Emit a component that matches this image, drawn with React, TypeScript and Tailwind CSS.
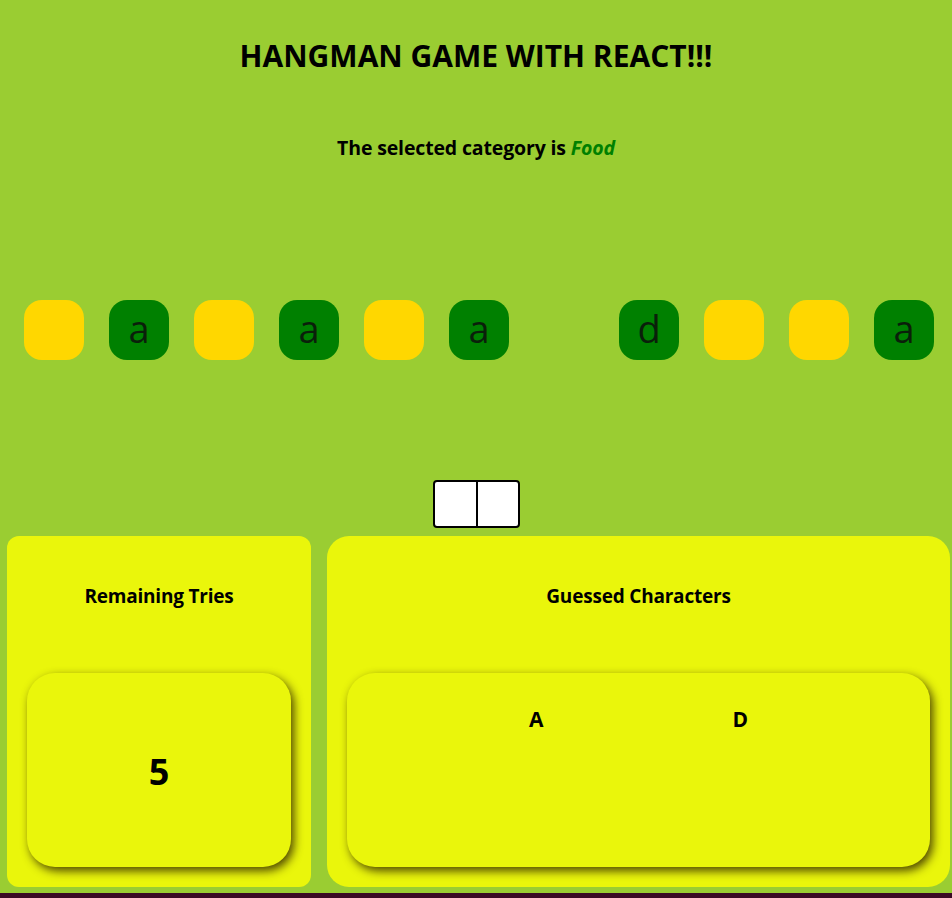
import React from "react";

const word = ["", "a", "", "a", "", "a", " ", "d", "", "", "a"];
const guessed = ["A", "D"];

export default function App() {
  return (
    <div className="min-h-[898px] bg-[#3b0a24] font-['Open_Sans',sans-serif] text-black">
      <div className="h-[893px] bg-[#9acd32] flex flex-col items-center">
        {/* Header */}
        <h1 className="mt-[37px] text-[30px] leading-[38px] font-bold">
          HANGMAN GAME WITH REACT!!!
        </h1>
        <p className="mt-[60px] text-[19.5px] leading-[26px] font-bold tracking-[-0.15px]">
          The selected category is{" "}
          <em className="text-[#008000] italic">Food</em>
        </p>

        {/* Word tiles */}
        <div className="mt-[139px] flex gap-[25px] pl-[6px]">
          {word.map((ch, i) =>
            ch === " " ? (
              <div key={i} className="w-[60px] h-[60px]" />
            ) : (
              <div
                key={i}
                className={`w-[60px] h-[60px] rounded-[18px] flex items-center justify-center text-[38px] leading-none pb-[4px] text-[#0a1f0a] ${
                  ch ? "bg-[#008000]" : "bg-[#ffd700]"
                }`}
              >
                {ch}
              </div>
            )
          )}
        </div>

        {/* Guess input */}
        <div className="mt-[120px] w-[87px] h-[48px] bg-white border-2 border-black rounded-[4px] flex justify-center pl-[1px]">
          <div className="w-[2px] h-full bg-black" />
        </div>

        {/* Panels */}
        <div className="mt-[8px] w-full flex gap-[16px] pl-[7px] pr-[2px]">
          <div className="w-[304px] h-[351px] bg-[#eaf60b] rounded-[12px] flex flex-col">
            <h2 className="mt-[47px] text-center text-[19px] leading-[26px] font-bold tracking-[-0.2px]">
              Remaining Tries
            </h2>
            <div className="mt-auto mx-[20px] mb-[20px] h-[194px] rounded-[28px] bg-[#eaf60b] shadow-[3px_4px_10px_rgba(50,40,0,0.85)] flex items-center justify-center pt-[4px]">
              <span className="text-[36px] leading-none font-bold">5</span>
            </div>
          </div>
          <div className="flex-1 h-[351px] bg-[#eaf60b] rounded-[22px] flex flex-col">
            <h2 className="mt-[47px] text-center text-[19px] leading-[26px] font-bold tracking-[-0.2px]">
              Guessed Characters
            </h2>
            <div className="mt-auto mx-[20px] mb-[20px] h-[194px] rounded-[28px] bg-[#eaf60b] shadow-[3px_4px_10px_rgba(50,40,0,0.85)] flex justify-center gap-[189px] items-start pt-[32px]">
              {guessed.map((g) => (
                <span key={g} className="text-[21px] leading-[28px] font-bold">
                  {g}
                </span>
              ))}
            </div>
          </div>
        </div>
      </div>
    </div>
  );
}
